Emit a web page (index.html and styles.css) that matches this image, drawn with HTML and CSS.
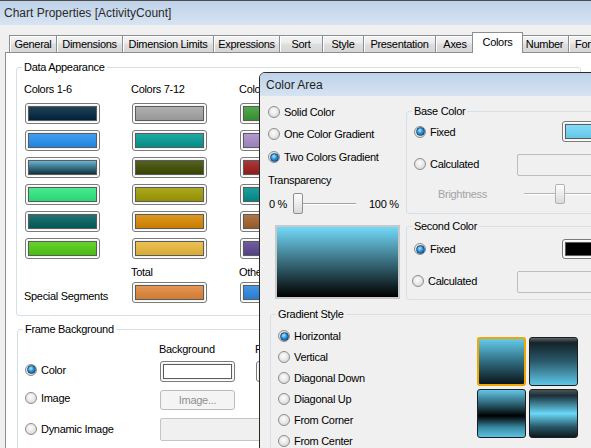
FILE: index.html
```html
<!DOCTYPE html>
<html>
<head>
<meta charset="utf-8">
<title>Chart Properties</title>
<link rel="stylesheet" href="styles.css">
</head>
<body>
<div class="win">
  <div class="titlebar">Chart Properties [ActivityCount]</div>
  <div class="client">
    <div class="tabs">
      <div class="tab tab-general">General</div>
      <div class="tab tab-dims">Dimensions</div>
      <div class="tab tab-limits">Dimension Limits</div>
      <div class="tab tab-expr">Expressions</div>
      <div class="tab tab-sort">Sort</div>
      <div class="tab tab-style">Style</div>
      <div class="tab tab-pres">Presentation</div>
      <div class="tab tab-axes">Axes</div>
      <div class="tab tab-colors active">Colors</div>
      <div class="tab tab-number">Number</div>
      <div class="tab tab-font">Font</div>
    </div>
    <div class="pane">
      <div class="group data-group">
        <div class="gt">Data Appearance</div>
        <div class="color-grid">
          <div class="col-label">Colors 1-6</div>
          <div class="col-label">Colors 7-12</div>
          <div class="col-label">Colors 13-18</div>

          <div class="cbtn c-navy"><i></i></div>
          <div class="cbtn c-gray"><i></i></div>
          <div class="cbtn c-green"><i></i></div>

          <div class="cbtn c-blue"><i></i></div>
          <div class="cbtn c-teal"><i></i></div>
          <div class="cbtn c-lav"><i></i></div>

          <div class="cbtn c-steel"><i></i></div>
          <div class="cbtn c-olive"><i></i></div>
          <div class="cbtn c-red"><i></i></div>

          <div class="cbtn c-mint"><i></i></div>
          <div class="cbtn c-yolive"><i></i></div>
          <div class="cbtn c-teal2"><i></i></div>

          <div class="cbtn c-dteal"><i></i></div>
          <div class="cbtn c-orange"><i></i></div>
          <div class="cbtn c-brown"><i></i></div>

          <div class="cbtn c-lime"><i></i></div>
          <div class="cbtn c-gold"><i></i></div>
          <div class="cbtn c-purple"><i></i></div>

          <div class="sub-label"></div>
          <div class="sub-label">Total</div>
          <div class="sub-label">Other</div>

          <div class="seg-label">Special Segments</div>
          <div class="cbtn c-total"><i></i></div>
          <div class="cbtn c-other"><i></i></div>
        </div>
      </div>

      <div class="group frame-group">
        <div class="gt">Frame Background</div>
        <div class="frame-head"><span>Background</span><span>Fill</span></div>
        <div class="frame-row fr1">
          <div class="opt"><span class="radio on"></span>Color</div>
          <div class="cbtn c-white"><i></i></div>
          <div class="cbtn c-white second"><i></i></div>
        </div>
        <div class="frame-row fr2">
          <div class="opt"><span class="radio"></span>Image</div>
          <div class="btn-dis">Image...</div>
        </div>
        <div class="frame-row fr3">
          <div class="opt"><span class="radio"></span>Dynamic Image</div>
          <div class="tb-dis"></div>
        </div>
      </div>
    </div>
  </div>
</div>

<div class="dialog">
  <div class="dlg-title">Color Area</div>
  <div class="dlg-body">
    <div class="dlg-top">
      <div class="dlg-left">
        <div class="opt r1"><span class="radio"></span>Solid Color</div>
        <div class="opt r2"><span class="radio"></span>One Color Gradient</div>
        <div class="opt r3"><span class="radio on"></span>Two Colors Gradient</div>
        <div class="trans-label">Transparency</div>
        <div class="slider-row">
          <span class="lo">0 %</span>
          <div class="slider tslider"><div class="thumb"></div></div>
          <span class="hi">100 %</span>
        </div>
        <div class="preview"></div>
      </div>
      <div class="dlg-right">
        <div class="group base-group">
          <div class="gt">Base Color</div>
          <div class="row fixed-row">
            <div class="opt"><span class="radio on"></span>Fixed</div>
            <div class="cbtn c-sky"><i></i></div>
          </div>
          <div class="row calc-row">
            <div class="opt"><span class="radio"></span>Calculated</div>
            <div class="textbox"></div>
          </div>
          <div class="row bright-row">
            <div class="opt dim">Brightness</div>
            <div class="slider bslider"><div class="thumb"></div></div>
          </div>
        </div>
        <div class="group second-group">
          <div class="gt">Second Color</div>
          <div class="row fixed-row">
            <div class="opt"><span class="radio on"></span>Fixed</div>
            <div class="cbtn c-black"><i></i></div>
          </div>
          <div class="row calc-row">
            <div class="opt shifted"><span class="radio"></span>Calculated</div>
            <div class="textbox"></div>
          </div>
        </div>
      </div>
    </div>
    <div class="group style-group">
      <div class="gt">Gradient Style</div>
      <div class="style-body">
        <div class="style-list">
          <div class="opt"><span class="radio on"></span>Horizontal</div>
          <div class="opt"><span class="radio"></span>Vertical</div>
          <div class="opt"><span class="radio"></span>Diagonal Down</div>
          <div class="opt"><span class="radio"></span>Diagonal Up</div>
          <div class="opt"><span class="radio"></span>From Corner</div>
          <div class="opt"><span class="radio"></span>From Center</div>
        </div>
        <div class="tiles">
          <div class="tile t1"></div>
          <div class="tile t2"></div>
          <div class="tile t3"></div>
          <div class="tile t4"></div>
        </div>
      </div>
    </div>
  </div>
</div>
</body>
</html>
```

FILE: styles.css
```css
* { box-sizing: border-box; }
html, body { margin: 0; padding: 0; }
body {
  width: 591px;
  height: 448px;
  overflow: hidden;
  position: relative;
  background: #f0f0f0;
  font-family: "Liberation Sans", Arial, sans-serif;
  font-size: 11px;
  letter-spacing: -0.3px;
  color: #000;
}

/* ---------- main window ---------- */
.win { height: 448px; border-top: 1px solid #4d4d4d; }
.titlebar {
  height: 24px;
  padding: 1px 0 0 4px;
  line-height: 23px;
  font-size: 12px;
  letter-spacing: 0;
  color: #2b2b2b;
  white-space: nowrap;
  background: linear-gradient(#bfd2e8, #d7e4f2);
}
.client { padding-top: 7px; }

.tabs {
  display: flex;
  align-items: flex-end;
  height: 21px;
  margin-bottom: -1px;
  padding-left: 9px;
  white-space: nowrap;
}
.tab {
  flex: none;
  height: 17px;
  margin-bottom: 1px;
  margin-left: -1px;
  line-height: 16px;
  text-align: center;
  border: 1px solid #8c8e94;
  border-bottom: 0;
  background: linear-gradient(#f4f4f4, #ebebeb 45%, #dedede 50%, #d6d6d6);
  box-shadow: inset 1px 1px 0 #fff;
}
.tab:first-child { margin-left: 0; }
.tab-general { width: 48px; }
.tab-dims    { width: 67px; }
.tab-limits  { width: 92px; }
.tab-expr    { width: 67px; }
.tab-sort    { width: 44px; }
.tab-style   { width: 42px; }
.tab-pres    { width: 73px; }
.tab-axes    { width: 40px; }
.tab-colors  { width: 47px; }
.tab-number  { width: 49px; }
.tab-font    { width: 50px; text-align: left; padding-left: 6px; }
.tab.active {
  position: relative;
  z-index: 1;
  width: 51px;
  height: 21px;
  margin: 0 -2px 0 -3px;
  padding-top: 1px;
  background: #fff;
  box-shadow: none;
}

.pane {
  width: 720px;
  height: 420px;
  margin-left: 5px;
  border: 1px solid #8c8e94;
  background: #fff;
}

/* ---------- group boxes ---------- */
.group {
  border: 1px solid #d5dfe5;
  border-radius: 3px;
  padding-left: 7px;
}
.gt {
  width: max-content;
  margin: -8px 0 0 -2px;
  padding: 0 2px;
  line-height: 14px;
  background: #fff;
}
.dialog .gt { background: #f0f0f0; }

.data-group { width: 565px; margin: 14px 0 0 10px; padding-bottom: 12px; }
.color-grid {
  display: grid;
  grid-template-columns: 107px 108px 108px;
  row-gap: 6px;
  margin-top: 8px;
}
.col-label { line-height: 14px; margin-bottom: 1px; white-space: nowrap; }
.sub-label { line-height: 14px; margin-bottom: -3px; min-height: 14px; }
.seg-label { line-height: 14px; align-self: end; white-space: nowrap; }

/* color buttons */
.cbtn {
  flex: none;
  width: 75px;
  height: 21px;
  margin-left: 1px;
  padding: 2px;
  border: 1px solid #7a7a7a;
  border-radius: 3px;
  background: #f2f2f2;
  box-shadow: inset 0 0 0 1px #fdfdfd;
}
.cbtn i {
  display: block;
  height: 100%;
  border: 1px solid #5c5c5c;
  background: linear-gradient(rgba(255,255,255,.13), rgba(0,0,0,.08)), var(--c);
}
.c-navy   { --c: #00253f; }
.c-blue   { --c: #2490ef; }
.c-steel i { background: linear-gradient(#6cb5cf, #3b7890 45%, #14303c); }
.c-mint   { --c: #2ee77e; }
.c-dteal  { --c: #005f5e; }
.c-lime   { --c: #50cb12; }
.c-gray   { --c: #a4a4a4; }
.c-teal   { --c: #009a92; }
.c-olive  { --c: #3c4a00; }
.c-yolive { --c: #9e9b00; }
.c-orange { --c: #d98800; }
.c-gold   { --c: #e8b83a; }
.c-total  { --c: #e0863a; }
.c-green  { --c: #3b9a33; }
.c-lav    { --c: #a68bc8; }
.c-red    { --c: #9d1c1c; }
.c-teal2  { --c: #00908d; }
.c-brown  { --c: #a2612a; }
.c-purple { --c: #5b4590; }
.c-other  { --c: #2c86e0; }
.c-white i { background: #fff; }
.c-sky    { --c: #6fd7f8; }
.c-black i { background: #000; }

/* frame background */
.frame-group { width: 560px; height: 200px; margin: 13px 0 0 11px; }
.frame-head { display: flex; margin-top: 6px; padding-left: 134px; line-height: 14px; white-space: nowrap; }
.frame-head span { width: 96px; }
.frame-row { display: flex; align-items: center; }
.frame-row > * { flex: none; }
.frame-row .opt { width: 135px; margin-bottom: 4px; }
.frame-row .cbtn { margin-left: 0; }
.frame-row .cbtn.second { margin-left: 21px; }
.fr1 { height: 21px; margin-top: 5px; }
.fr2 { height: 20px; margin-top: 8px; }
.fr3 { height: 23px; margin-top: 8px; }
.fr3 .opt { margin-bottom: 2px; }
.btn-dis {
  width: 75px;
  height: 20px;
  border: 1px solid #bcbcbc;
  border-radius: 3px;
  background: #f4f4f4;
  color: #8f8f8f;
  text-align: center;
  line-height: 18px;
}
.tb-dis {
  width: 130px;
  height: 23px;
  border: 1px solid #c4c4c4;
  border-radius: 2px;
  background: #f0f0f0;
}

/* ---------- radio ---------- */
.opt { display: flex; align-items: center; line-height: 14px; white-space: nowrap; }
.radio {
  flex: none;
  display: flex;
  align-items: center;
  justify-content: center;
  width: 12px;
  height: 12px;
  margin-right: 4px;
  border: 1px solid #8d8d8d;
  border-radius: 50%;
  background: radial-gradient(circle at 45% 40%, #fdfdfd 0, #ececec 40%, #cdcdcd 100%);
}
.radio.on::after {
  content: "";
  width: 7px;
  height: 7px;
  border: 1px solid #1a4a75;
  border-radius: 50%;
  background: radial-gradient(circle at 40% 35%, #aee8ff 0, #2b93d8 45%, #0a4c88 100%);
}

/* ---------- dialog ---------- */
.dialog {
  position: absolute;
  left: 259px;
  top: 72px;
  width: 345px;
  height: 390px;
  border: 1px solid #2a2a2a;
  border-radius: 6px 6px 0 0;
  background: #f0f0f0;
  overflow: hidden;
}
.dlg-title {
  height: 23px;
  padding: 1px 0 0 6px;
  line-height: 22px;
  font-size: 12px;
  letter-spacing: 0;
  color: #1e1e1e;
  background: linear-gradient(#bed2e8, #d6e3f2);
}
.dlg-top { display: grid; grid-template-columns: 146px 1fr; }
.dlg-left { padding: 9px 0 0 8px; }
.dlg-left .opt { height: 14px; }
.r2 { margin-top: 8px; }
.r3 { margin-top: 9px; }
.trans-label { margin-top: 9px; line-height: 14px; }
.slider-row { display: flex; align-items: center; height: 21px; margin-top: 6px; white-space: nowrap; }
.slider-row > * { flex: none; }
.slider-row .lo { width: 21px; padding-left: 1px; }
.slider-row .hi { margin-left: 10px; }
.slider {
  display: flex;
  align-items: center;
  background-repeat: no-repeat;
}
.tslider {
  width: 70px;
  height: 21px;
  background-image: linear-gradient(transparent 10px, #a3a3a3 10px, #a3a3a3 11px, #fff 11px, #fff 12px, transparent 12px);
  background-size: 63px 100%;
  background-position: 4px 0;
}
.tslider .thumb { margin-left: 4px; }
.thumb {
  flex: none;
  width: 10px;
  height: 21px;
  border: 1px solid #8f8f8f;
  border-radius: 2px;
  background: linear-gradient(#fdfdfd, #ececec 50%, #d9d9d9);
}
.preview {
  width: 125px;
  height: 74px;
  margin: 11px 0 0 7px;
  border: 2px solid #c9c9c9;
  background: linear-gradient(#72d9f9, #000);
}

.row { display: flex; align-items: center; }
.row > * { flex: none; }
.row .opt { width: 103px; }
.base-group { width: 260px; margin-top: 15px; padding-bottom: 9px; }
.fixed-row { height: 21px; margin-top: 3px; }
.fixed-row .cbtn { margin-left: 45px; }
.calc-row { height: 22px; margin-top: 12px; }
.calc-row .opt { margin-bottom: 2px; }
.textbox {
  width: 100px;
  height: 22px;
  border: 1px solid #bdbdbd;
  border-radius: 2px;
  background: #f0f0f0;
}
.bright-row { height: 20px; margin-top: 8px; }
.opt.dim { padding-left: 24px; color: #a3a3a3; }
.bslider {
  width: 120px;
  height: 20px;
  background-image: linear-gradient(transparent 9px, #b4b4b4 9px, #b4b4b4 10px, #fff 10px, #fff 11px, transparent 11px);
  background-size: 113px 100%;
  background-position: 7px 0;
}
.bslider .thumb { height: 20px; margin-left: 38px; border-color: #b2b2b2; }

.second-group { width: 260px; margin-top: 12px; padding-bottom: 6px; }
.second-group .fixed-row { height: 20px; margin-top: 6px; }
.second-group .fixed-row .cbtn { height: 20px; }
.row .opt.shifted { width: 105px; margin-left: -2px; margin-bottom: 3px; }

.style-group { width: 340px; height: 200px; margin: 14px 0 0 10px; }
.style-body { display: flex; }
.style-list { display: flex; flex-direction: column; gap: 7px; width: 199px; margin-top: 8px; }
.style-list .opt { height: 14px; }
.tiles {
  display: grid;
  grid-template-columns: 49px 49px;
  grid-auto-rows: 49px;
  gap: 3px;
  margin-top: 16px;
}
.tile {
  border: 1px solid #1e1e1e;
  border-radius: 3px;
}
.t1 {
  border: 2px solid #f0a500;
  background: linear-gradient(#64cbeb, #2f6d80 50%, #0a1519);
}
.t2 { background: linear-gradient(#5d6468, #14232a 10%, #2a5a6a 50%, #5ec6e7); }
.t3 { background: linear-gradient(#64c7e6, #2b6070 30%, #000 55%, #3a8aa4 80%, #5cc2e2); }
.t4 { background: linear-gradient(#4d5558, #1a3038 12%, #6ad8f8 50%, #2a5868 78%, #0e1a1e); }
```
